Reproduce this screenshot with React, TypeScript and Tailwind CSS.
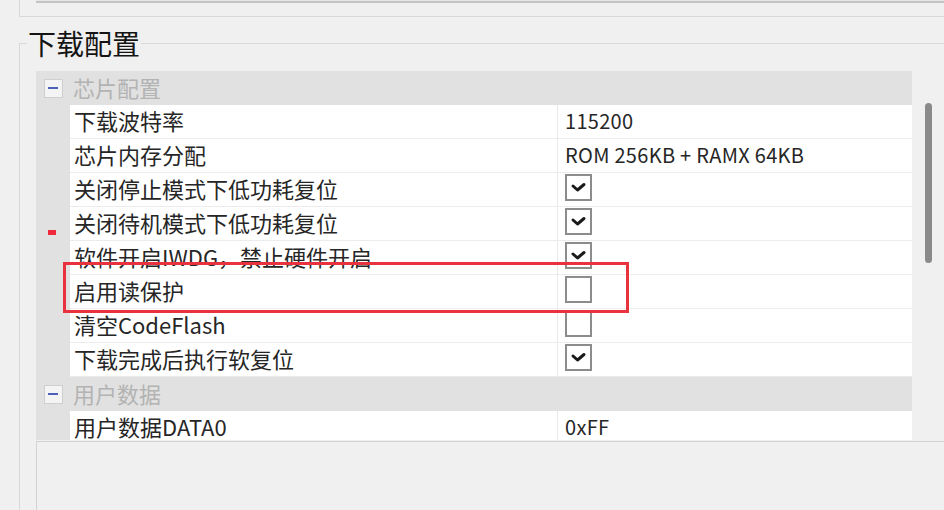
import { Fragment } from 'react';

type Row = { label: string; value?: string; checked?: boolean };

const chipRows: Row[] = [
  { label: '下载波特率', value: '115200' },
  { label: '芯片内存分配', value: 'ROM 256KB + RAMX 64KB' },
  { label: '关闭停止模式下低功耗复位', checked: true },
  { label: '关闭待机模式下低功耗复位', checked: true },
  { label: '软件开启IWDG，禁止硬件开启', checked: true },
  { label: '启用读保护', checked: false },
  { label: '清空CodeFlash', checked: false },
  { label: '下载完成后执行软复位', checked: true },
];

const userRows: Row[] = [{ label: '用户数据DATA0', value: '0xFF' }];

const font = {
  fontFamily: '"Noto Sans CJK SC", "Noto Sans", "Liberation Sans", sans-serif',
};

function CheckBox({ checked }: { checked: boolean }) {
  return (
    <div className="mt-[1px] h-[27px] w-[27px] border-2 border-[#8c8c8c] bg-white">
      {checked && (
        <svg width="23" height="23" viewBox="0 0 23 23">
          <polyline
            points="6,10 10.5,14 17,8.5"
            fill="none"
            stroke="#1a1a1a"
            strokeWidth="3"
            strokeLinecap="round"
            strokeLinejoin="round"
          />
        </svg>
      )}
    </div>
  );
}

function Category({ title }: { title: string }) {
  return (
    <div className="flex h-[34px] items-center bg-[#e1e1e1]">
      <div className="flex w-[34px] justify-center">
        <div className="flex h-[19px] w-[19px] items-center justify-center border border-[#cfcfcf] bg-[#f4f4f4]">
          <div className="h-[2px] w-[10px] bg-[#4b62b8]" />
        </div>
      </div>
      <span className="pl-[3px] pb-[3px] text-[22px] leading-[26px] text-[#b3b3b3]">{title}</span>
    </div>
  );
}

function ItemRow({ row }: { row: Row }) {
  return (
    <div className="flex h-[34px]">
      <div className="w-[34px] shrink-0 bg-[#e1e1e1]" />
      <div className="flex flex-1 border-b border-[#ececec] bg-white">
        <div className="flex w-[488px] items-center border-r border-[#e9e9e9] pl-[4px] pb-[4px] text-[22px] leading-[26px] text-[#262626]">
          {row.label}
        </div>
        <div className="flex flex-1 items-start pl-[7px]">
          {row.value !== undefined ? (
            <span className="pt-[2px] text-[20px] leading-[28px] tracking-[0.3px] text-[#262626]">{row.value}</span>
          ) : (
            <CheckBox checked={!!row.checked} />
          )}
        </div>
      </div>
    </div>
  );
}

export default function App() {
  return (
    <div className="relative h-[510px] w-[944px] overflow-hidden bg-[#f0f0f0]" style={font}>
      <div className="ml-[19px] h-[17px] border-b border-l border-[#d9d9d9] pl-[16px]">
        <div className="h-[3px] border-b-2 border-[#c4c4c4] bg-[#e6e6e6]" />
      </div>

      <fieldset className="ml-[19px] mt-[8px] w-[960px] border-l border-t border-[#d9d9d9] pl-[16px]">
        <legend className="-ml-[9px] px-[1px] text-[28px] leading-[36px] text-[#141414]">下载配置</legend>

        <div className="mt-[10px] flex h-[369px] overflow-hidden">
          <div className="w-[876px]">
            <Category title="芯片配置" />
            {chipRows.map((r) => (
              <ItemRow key={r.label} row={r} />
            ))}
            <Category title="用户数据" />
            {userRows.map((r) => (
              <Fragment key={r.label}>
                <ItemRow row={r} />
              </Fragment>
            ))}
          </div>
          <div className="flex-1 pl-[13px] pt-[32px]">
            <div className="h-[160px] w-[7px] rounded-full bg-[#8a8a8a]" />
          </div>
        </div>

        <div className="mt-[1px] h-[80px] border-l border-t border-[#d2d2d2] bg-[#f0f0f0]" />
      </fieldset>

      <div className="absolute left-[48px] top-[230px] h-[5px] w-[8px] bg-[#ee2a3c]" />
      <div className="absolute left-[63px] top-[262px] h-[51px] w-[566px] border-[3px] border-[#e8333f]" />
    </div>
  );
}
